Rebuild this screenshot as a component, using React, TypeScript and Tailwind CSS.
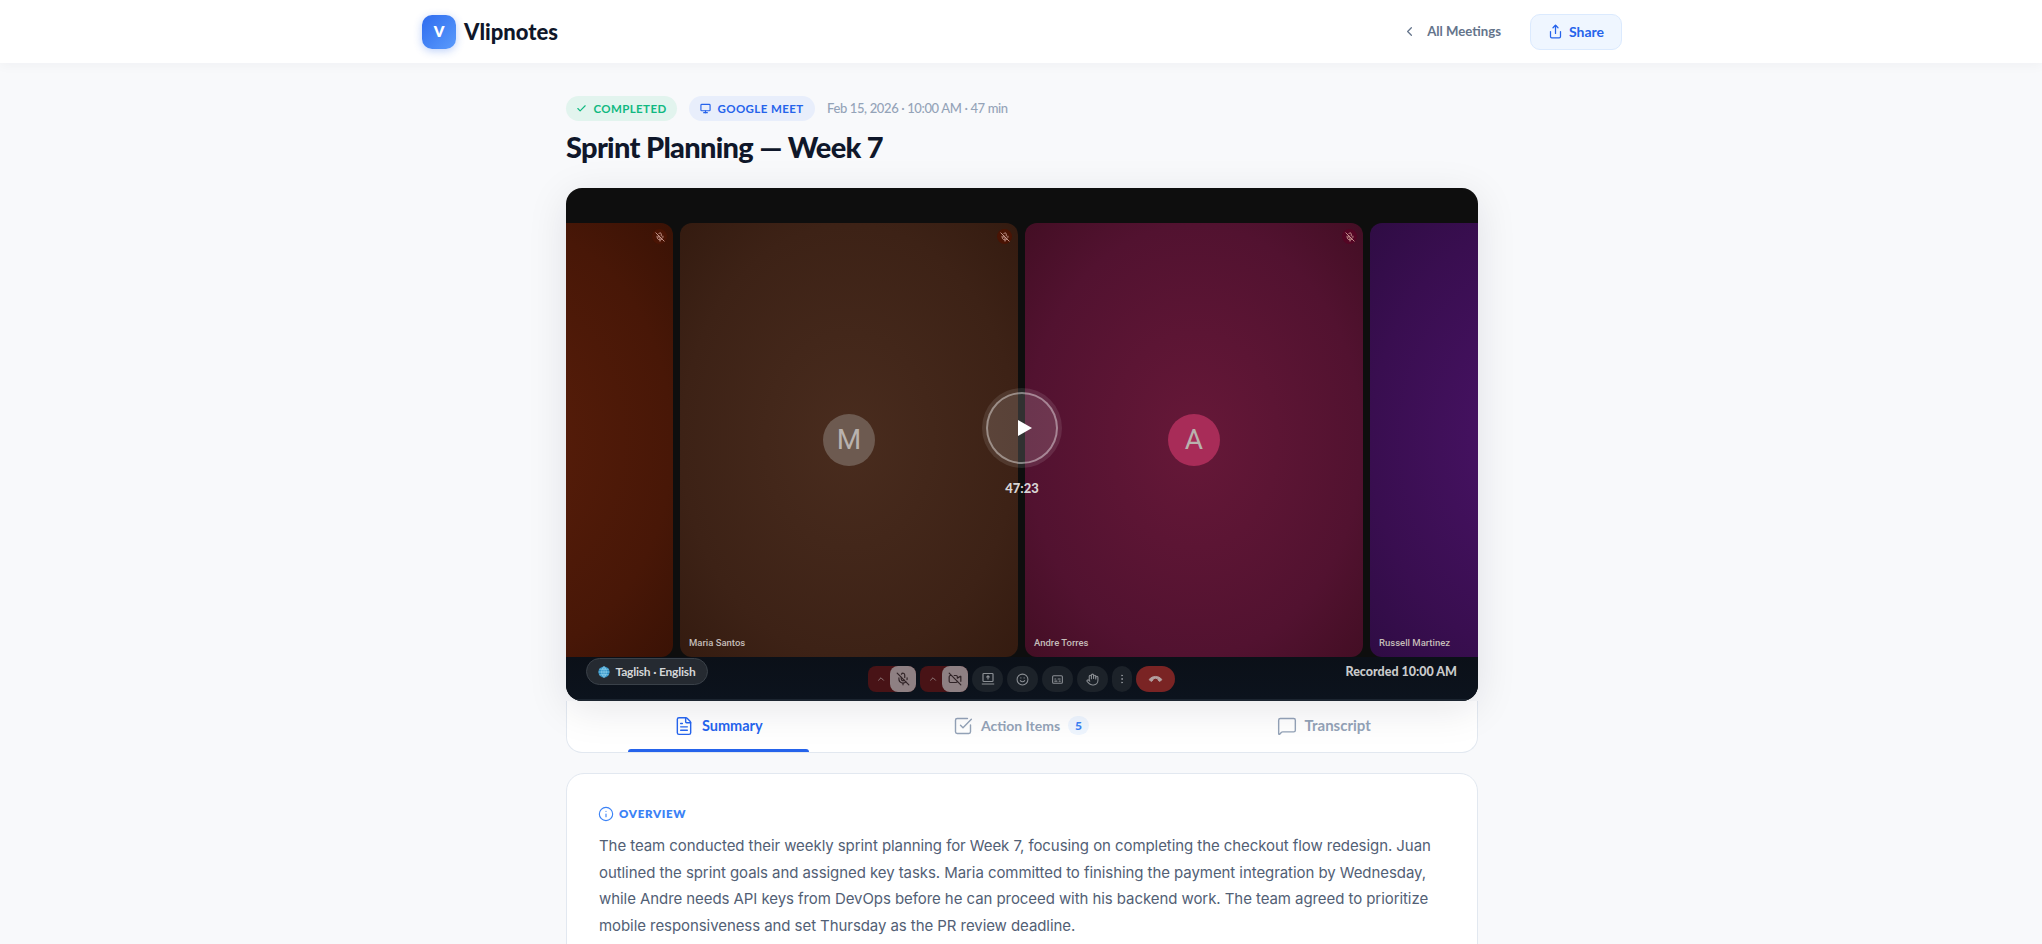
import { Captions, Check, ChevronLeft, ChevronUp, FileText, Hand, Info, MessageSquare, MicOff, Monitor, MoreVertical, Phone, Share, Smile, SquareCheckBig, VideoOff } from 'lucide-react'

const TILES = [
  { name: '', bg: 'bg-[radial-gradient(ellipse_at_center,#591e0a_0%,#481707_70%,#3a1205_100%)]', badge: 'bg-[#4a1404]' },
  { name: 'Maria Santos', initial: 'M', bg: 'bg-[radial-gradient(ellipse_at_center,#492c1e_0%,#3d2216_70%,#341b10_100%)]', badge: 'bg-[#4a1404]', avatar: 'bg-[#6d5a50]' },
  { name: 'Andre Torres', initial: 'A', bg: 'bg-[radial-gradient(ellipse_at_center,#661838_0%,#521230_70%,#430e24_100%)]', badge: 'bg-[#540524]', avatar: 'bg-[#a82c58]' },
  { name: 'Russell Martinez', bg: 'bg-[radial-gradient(ellipse_at_center,#4a1368_0%,#390e50_70%,#2f0c44_100%)]', badge: 'bg-[#2f0c44]' },
]

function Tile({ name, initial, bg, badge, avatar }: { name: string; initial?: string; bg: string; badge: string; avatar?: string }) {
  return (
    <div className={`relative flex h-[434px] w-[338px] flex-none items-center justify-center overflow-hidden rounded-[12px] ${bg}`}>
      <div className={`absolute right-[6px] top-[6px] flex h-[15px] w-[15px] items-center justify-center rounded-full ${badge}`}>
        <MicOff size={10} className="text-[#d9a9a0]" />
      </div>
      {initial && (
        <div className={`flex h-[52px] w-[52px] items-center justify-center rounded-full text-[28px] text-[#b9b2ae] font-['Roboto',sans-serif] ${avatar}`}>
          {initial}
        </div>
      )}
      <span className="absolute bottom-[7px] left-[9px] text-[9.5px] font-medium text-[#c4bcb8] font-['Roboto',sans-serif]">{name}</span>
    </div>
  )
}

function RoundBtn({ children, w = 'w-[31px]' }: { children: React.ReactNode; w?: string }) {
  return <div className={`flex h-[26px] items-center justify-center rounded-full bg-[#1c2229] text-[#8b8f94] ${w}`}>{children}</div>
}

function ToggleBtn({ children }: { children: React.ReactNode }) {
  return (
    <div className="flex h-[26px] w-[48px] items-center rounded-[8px] bg-[#481316]">
      <ChevronUp size={10} className="ml-[8px] text-[#9a8a8a]" />
      <div className="ml-auto flex h-[26px] w-[26px] items-center justify-center rounded-[8px] bg-[#8e8083] text-[#2f2226]">{children}</div>
    </div>
  )
}

function Globe() {
  return (
    <svg width="12" height="12" viewBox="0 0 12 12" fill="none">
      <circle cx="6" cy="6" r="5.6" fill="#2f8fc4" />
      <path d="M.5 6h11M6 .5v11M1.3 3.2h9.4M1.3 8.8h9.4M6 .5C3 3 3 9 6 11.5M6 .5c3 2.5 3 8.5 0 11" stroke="#9ad8f2" strokeWidth=".7" />
    </svg>
  )
}

// Meet's "present" icon: monitor with an up arrow on a base line
function PresentIcon() {
  return (
    <svg width="14" height="14" viewBox="0 0 14 14" fill="none" stroke="currentColor" strokeWidth="1.2">
      <rect x="2" y="1.5" width="10" height="8" rx=".8" />
      <path d="M7 7.5V4M5.4 5.4 7 3.8l1.6 1.6M.8 12h12.4" />
    </svg>
  )
}

export default function App() {
  return (
    <div className="box-border h-[944px] overflow-hidden bg-[#f8f9fb] pl-[2px] font-['Lato',sans-serif]">
      <nav className="-ml-[2px] h-[63px] bg-white pl-[2px] shadow-[0_2px_12px_rgba(15,23,42,0.04)]">
        <div className="mx-auto flex h-full w-[1200px] items-center justify-between">
          <div className="flex items-center gap-[8px]">
            <div className="flex h-[34px] w-[34px] items-center justify-center rounded-[10px] bg-gradient-to-br from-[#2f6bef] to-[#5b9bfb] text-[15px] font-extrabold text-white shadow-[0_2px_8px_rgba(37,99,235,0.3)]">V</div>
            <span className="text-[22px] font-black text-[#0f172a]">Vlipnotes</span>
          </div>
          <div className="flex items-center gap-[29px]">
            <div className="flex items-center gap-[10px] text-[13.2px] font-bold text-[#64748b]">
              <ChevronLeft size={15} strokeWidth={2} />
              <span>All Meetings</span>
            </div>
            <div className="flex h-[36px] w-[92px] items-center justify-center gap-[6px] rounded-[10px] border border-[#dbeafe] bg-[#eff6ff] text-[14px] font-bold text-[#2563eb]">
              <Share size={15} strokeWidth={2} />
              <span>Share</span>
            </div>
          </div>
        </div>
      </nav>

      <main className="mx-auto w-[912px] pt-[33px]">
        <div className="flex items-center gap-[12px]">
          <span className="flex h-[25px] w-[111px] items-center justify-center gap-[6px] rounded-full bg-[#e2f4ee] text-[11.5px] font-bold tracking-[0.4px] text-[#10b981]">
            <Check size={11} strokeWidth={2.5} />
            COMPLETED
          </span>
          <span className="flex h-[25px] w-[126px] items-center justify-center gap-[6px] rounded-full bg-[#e8eefb] text-[11.5px] font-bold tracking-[0.4px] text-[#2563eb]">
            <Monitor size={11} strokeWidth={2.5} />
            GOOGLE MEET
          </span>
          <span className="text-[13px] font-medium tracking-[-0.37px] text-[#94a3b8]">Feb 15, 2026 · 10:00 AM · 47 min</span>
        </div>
        <h1 className="mt-[8px] text-[29px] leading-[36px] font-black tracking-[-0.7px] text-[#0f172a]">Sprint Planning — Week 7</h1>

        <section className="relative mt-[23px] h-[513px] overflow-hidden rounded-[16px] bg-[#0e0e0e] shadow-[0_8px_40px_rgba(15,23,42,0.1)]">
          <div className="flex justify-center gap-[7px] pr-[1px] pt-[35px]">
            {TILES.map(t => <Tile key={t.name || 'left'} {...t} />)}
          </div>

          <div className="relative box-border h-[44px] border-b-[2px] border-[#1c2530] bg-gradient-to-b from-[#0b1018] to-[#0c131d]">
            <div className="flex items-center justify-center gap-[4px] pr-[1px] pt-[9px]">
              <ToggleBtn><MicOff size={14} /></ToggleBtn>
              <ToggleBtn><VideoOff size={14} /></ToggleBtn>
              <RoundBtn><PresentIcon /></RoundBtn>
              <RoundBtn><Smile size={13} /></RoundBtn>
              <RoundBtn><Captions size={13} /></RoundBtn>
              <RoundBtn><Hand size={13} /></RoundBtn>
              <RoundBtn w="w-[20px]"><MoreVertical size={12} /></RoundBtn>
              <div className="flex h-[26px] w-[39px] items-center justify-center rounded-full bg-[#7a2424] text-[#b3a0a0]">
                <Phone size={11} fill="currentColor" className="rotate-[135deg]" />
              </div>
            </div>
            <div className="absolute left-[20px] top-[1px] flex h-[27px] w-[122px] items-center justify-center gap-[5px] rounded-full border border-[#3a4149] bg-[#252a31] text-[12px] font-bold tracking-[-0.2px] text-[#d4d6d8]">
              <Globe />
              <span>Taglish · English</span>
            </div>
            <span className="absolute right-[21px] top-[6px] text-[12.5px] font-black text-[#c9cacb]">Recorded 10:00 AM</span>
          </div>

          <div className="absolute left-[420px] top-[204px] box-border flex h-[72px] w-[72px] items-center justify-center rounded-full border-[2px] border-white/40 bg-white/15 shadow-[0_0_0_3px_transparent,0_0_0_4px_rgba(255,255,255,0.1)]">
            <svg width="14" height="16" viewBox="0 0 14 16" className="ml-[6px]"><path d="M0 0l14 8L0 16z" fill="#fff" /></svg>
          </div>
          <span className="absolute left-0 right-0 top-[291px] text-center text-[13px] font-black text-[#d8d5d5]">47:23</span>
        </section>

        <div className="flex h-[52px] rounded-b-[16px] border border-t-0 border-[#e2e8f0] bg-white pb-[2px] pr-[2px]">
          <div className="relative flex flex-1 items-center justify-center gap-[8px] text-[14.5px] font-bold text-[#2563eb]">
            <FileText size={20} strokeWidth={1.7} />
            <span>Summary</span>
            <div className="absolute -bottom-[2px] left-[20%] h-[3px] w-[60%] rounded-t-[3px] bg-[#2563eb]" />
          </div>
          <div className="flex flex-1 items-center justify-center gap-[8px] text-[14px] font-bold text-[#94a3b8]">
            <SquareCheckBig size={20} strokeWidth={1.7} />
            <span>Action Items</span>
            <span className="flex h-[19px] w-[21px] items-center justify-center rounded-full bg-[#eff6ff] text-[12px] font-black text-[#3b82f6]">5</span>
          </div>
          <div className="flex flex-1 items-center justify-center gap-[8px] text-[15px] font-bold text-[#94a3b8]">
            <MessageSquare size={20} strokeWidth={1.7} />
            <span>Transcript</span>
          </div>
        </div>

        <section className="mt-[20px] rounded-[18px] border border-[#e2e8f0] bg-white px-[32px] pb-[24px] pt-[32px]">
          <div className="-ml-[1px] flex items-center gap-[5px] text-[11.5px] leading-[16px] font-extrabold tracking-[0.7px] text-[#3b82f6]">
            <Info size={16} strokeWidth={1.7} />
            OVERVIEW
          </div>
          <p className="mt-[11px] text-[15px] leading-[26.7px] tracking-[-0.07px] text-[#526075] font-['Inter',sans-serif]">
            The team conducted their weekly sprint planning for Week 7, focusing on completing the checkout flow redesign. Juan outlined the sprint goals and assigned key tasks. Maria committed to finishing the payment integration by Wednesday, while Andre needs API keys from DevOps before he can proceed with his backend work. The team agreed to prioritize mobile responsiveness and set Thursday as the PR review deadline.
          </p>
        </section>
      </main>
    </div>
  )
}
